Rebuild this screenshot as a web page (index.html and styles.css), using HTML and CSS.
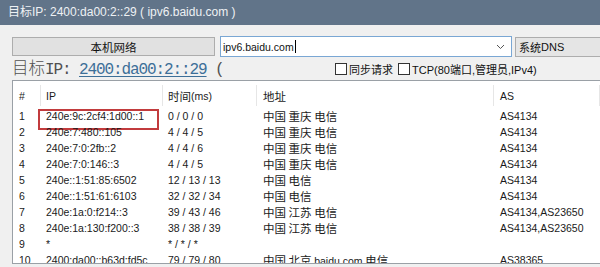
FILE: index.html
```html
<!DOCTYPE html>
<html>
<head>
<meta charset="utf-8">
<link rel="stylesheet" href="styles.css">
</head>
<body>
<div class="titlebar">目标IP: 2400:da00:2::29 ( ipv6.baidu.com )</div>
<div class="content">
  <div class="row1">
    <div class="btn"><span class="cn">本机网络</span></div>
    <div class="input">
      <span class="val">ipv6.baidu.com</span><span class="caret"></span>
      <svg class="arrow" width="9" height="6" viewBox="0 0 9 6"><path d="M1 1 L4.5 4.5 L8 1" fill="none" stroke="#555" stroke-width="1"/></svg>
    </div>
    <div class="combo"><span class="cn">系统</span>DNS</div>
  </div>
  <div class="row2">
    <div class="label"><span class="bigcn">目标</span><span class="mono">IP: </span><span class="link mono">2400:da00:2::29</span><span class="mono"> ( ipv6.baidu.com )</span></div>
    <div class="checks">
      <span class="box"></span><span class="cn ctext">同步请求</span>
      <span class="box"></span><span class="ctext">TCP(80<span class="cn">端口</span>,<span class="cn">管理员</span>,IPv4)</span>
    </div>
  </div>
  <div class="list">
    <div class="head">
      <div class="c c1">#</div>
      <div class="c c2">IP</div>
      <div class="c c3"><span class="cn">时间</span>(ms)</div>
      <div class="c c4"><span class="cn">地址</span></div>
      <div class="c c5">AS</div>
    </div>
    <div class="rows">
      <div class="r"><div class="c1">1</div><div class="c2 hl">240e:9c:2cf4:1d00::1</div><div class="c3">0 / 0 / 0</div><div class="c4 cn">中国 重庆 电信</div><div class="c5">AS4134</div></div>
      <div class="r"><div class="c1">2</div><div class="c2">240e:7:480::105</div><div class="c3">4 / 4 / 5</div><div class="c4 cn">中国 重庆 电信</div><div class="c5">AS4134</div></div>
      <div class="r"><div class="c1">3</div><div class="c2">240e:7:0:2fb::2</div><div class="c3">4 / 4 / 6</div><div class="c4 cn">中国 重庆 电信</div><div class="c5">AS4134</div></div>
      <div class="r"><div class="c1">4</div><div class="c2">240e:7:0:146::3</div><div class="c3">4 / 4 / 5</div><div class="c4 cn">中国 重庆 电信</div><div class="c5">AS4134</div></div>
      <div class="r"><div class="c1">5</div><div class="c2">240e::1:51:85:6502</div><div class="c3">12 / 13 / 13</div><div class="c4 cn">中国 电信</div><div class="c5">AS4134</div></div>
      <div class="r"><div class="c1">6</div><div class="c2">240e::1:51:61:6103</div><div class="c3">32 / 32 / 34</div><div class="c4 cn">中国 电信</div><div class="c5">AS4134</div></div>
      <div class="r"><div class="c1">7</div><div class="c2">240e:1a:0:f214::3</div><div class="c3">39 / 43 / 46</div><div class="c4 cn">中国 江苏 电信</div><div class="c5">AS4134,AS23650</div></div>
      <div class="r"><div class="c1">8</div><div class="c2">240e:1a:130:f200::3</div><div class="c3">38 / 38 / 39</div><div class="c4 cn">中国 江苏 电信</div><div class="c5">AS4134,AS23650</div></div>
      <div class="r"><div class="c1">9</div><div class="c2">*</div><div class="c3">* / * / *</div><div class="c4"></div><div class="c5"></div></div>
      <div class="r"><div class="c1">10</div><div class="c2">2400:da00::b63d:fd5c</div><div class="c3">79 / 79 / 80</div><div class="c4"><span class="cn">中国 北京 </span>baidu.com<span class="cn"> 电信</span></div><div class="c5">AS38365</div></div>
    </div>
  </div>
</div>
</body>
</html>
```

FILE: styles.css
```css
* { box-sizing: border-box; }
html, body { margin: 0; padding: 0; }
body {
  width: 600px;
  height: 267px;
  overflow: hidden;
  background: #f0f0f0;
  font-family: "Liberation Sans", "Noto Sans CJK SC", sans-serif;
  font-size: 10.5px;
  color: #1a1a1a;
}
.cn { font-family: "Noto Sans CJK SC", sans-serif; }
.titlebar {
  height: 25px;
  background: #617489;
  color: #eef1f4;
  font-size: 12px;
  line-height: 25px;
  padding-left: 8px;
}
.content { padding: 11px 0 0 12px; }
.row1 { display: flex; align-items: center; height: 21px; }
.btn {
  width: 203px;
  height: 19px;
  background: #e1e1e1;
  border: 1px solid #adadad;
  display: flex;
  align-items: center;
  justify-content: center;
  font-size: 11.5px;
  color: #111;
  margin-right: 5px;
}
.input {
  width: 292px;
  height: 21px;
  background: #fff;
  border: 1px solid #7aa7d4;
  display: flex;
  align-items: center;
  padding-left: 2px;
}
.val { font-size: 10.5px; color: #111; }
.caret { width: 1px; height: 13px; background: #000; margin-left: 1px; }
.arrow { margin-left: auto; margin-right: 6px; }
.combo {
  flex: 1;
  height: 20px;
  margin-left: 3px;
  background: #e5e5e5;
  border: 1px solid #adadad;
  border-right: none;
  display: flex;
  align-items: center;
  padding-left: 3px;
  font-size: 11px;
  color: #111;
}
.row2 { display: flex; height: 23px; }
.label {
  width: 323px;
  height: 23px;
  overflow: hidden;
  line-height: 21px;
  color: #505050;
  padding-right: 110px;
}
.bigcn { font-family: "Noto Sans CJK SC", sans-serif; font-size: 16.5px; font-weight: 300; }
.mono { font-family: "Liberation Mono", monospace; font-size: 16px; letter-spacing: -1.1px; }
.link { color: #3d6f98; text-decoration: underline; text-underline-offset: 2px; }
.checks { display: flex; align-items: center; height: 21px; padding-top: 3px; color: #111; }
.box {
  width: 12px; height: 12px;
  border: 1px solid #333;
  background: #fff;
  margin-right: 2px;
}
.ctext { font-size: 11px; margin-right: 5px; }
.list {
  position: relative;
  height: 184px;
  background: #fff;
  border: 1px solid #9aa0a6;
  border-right: none;
  overflow: hidden;
}
.head { display: flex; height: 25px; padding-top: 4px; }
.head .c { border-right: 1px solid #e6e6e6; display: flex; align-items: center; height: 21px; }
.head .c .cn, .head .c4 { font-size: 11.5px; }
.rows { padding-top: 2px; }
.r { display: flex; height: 16px; align-items: center; white-space: nowrap; }
.c1 { width: 28px; padding-left: 6px; }
.c2 { width: 122px; padding-left: 5px; position: relative; }
.c3 { width: 94px; padding-left: 5px; }
.c4 { width: 237px; padding-left: 6px; }
.c5 { flex: 1; padding-left: 6px; }
.r .c4.cn, .r .c4 .cn { font-size: 11.5px; }
.hl::after {
  content: "";
  position: absolute;
  left: -3px;
  top: -1px;
  width: 117px;
  height: 17px;
  border: 2px solid #c23b3d;
}
```
